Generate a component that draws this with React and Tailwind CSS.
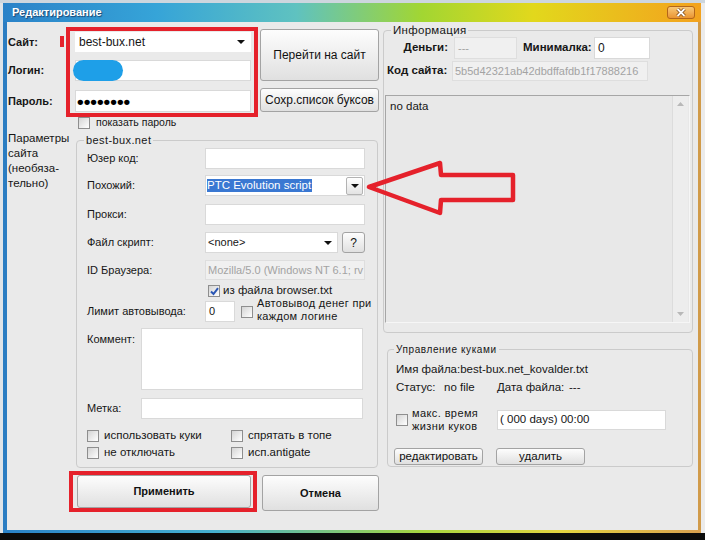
import React from "react";

const Tri = ({ color = "#111" }) => (
  <svg width="8" height="4" viewBox="0 0 8 4">
    <path d="M0 0H8L4 4Z" fill={color} />
  </svg>
);

const Box = ({ checked }) => (
  <span className="w-[12px] h-[12px] shrink-0 border border-[#8e8e8e] bg-linear-to-br from-[#d4d4d4] to-white flex items-center justify-center">
    {checked && (
      <svg width="9" height="9" viewBox="0 0 9 9">
        <path d="M1 4.5L3.5 7L8 1.2" fill="none" stroke="#2b57b5" strokeWidth="2" />
      </svg>
    )}
  </span>
);

const Btn = ({ className = "", children }) => (
  <div
    className={`shrink-0 flex items-center justify-center border border-[#a3a3a3] rounded-[3px] bg-linear-to-b from-[#fdfdfd] to-[#e0e0e0] text-[#111] ${className}`}
  >
    {children}
  </div>
);

const Field = ({ className = "", children }) => (
  <div className={`shrink-0 flex items-center bg-white border border-[#d9d9d9] overflow-hidden whitespace-nowrap ${className}`}>
    {children}
  </div>
);

const Dim = ({ className = "", children }) => (
  <div className={`shrink-0 flex items-center bg-[#f0f0f0] border border-[#dedede] text-[#a3a3a3] overflow-hidden whitespace-nowrap ${className}`}>
    {children}
  </div>
);

const Row = ({ label, className = "", children }) => (
  <div className={`flex items-center ${className}`}>
    <div className="w-[118px] shrink-0">{label}</div>
    {children}
  </div>
);

export default function App() {
  return (
    <div className="w-[705px] h-[540px] relative overflow-hidden bg-[#0b0b0b] font-['Liberation_Sans',Arial,sans-serif] text-[11px] text-[#161616]">
      <div className="h-[3px] bg-[#cdd6de]" />
      <div className="flex h-[530px]">
        <div className="w-[3px] bg-[#dfe4e8]" />
        <div className="w-[698px] flex flex-col">
          {/* Title bar */}
          <div className="h-[19px] flex items-center justify-between bg-[linear-gradient(90deg,#2a82c8_0%,#36a4d8_22%,#5fc2c0_42%,#a2d632_60%,#e2d81c_76%,#f3a21e_100%)]">
            <span className="pl-[9px] text-white font-bold text-[11px] [text-shadow:1px_1px_1px_#1d4670]">
              Редактирование
            </span>
            <div className="mr-[6px] w-[28px] h-[13px] rounded-[3px] border border-[#b4651a] bg-linear-to-b from-[#f8c774] to-[#ea9530] flex items-center justify-center">
              <svg width="12" height="9" viewBox="0 0 12 9">
                <path d="M2.5 1L9.5 8M9.5 1L2.5 8" stroke="#7a4512" strokeWidth="3.4" />
                <path d="M2.5 1L9.5 8M9.5 1L2.5 8" stroke="#fff" strokeWidth="1.8" />
              </svg>
            </div>
          </div>

          <div className="flex h-[508px]">
            <div className="w-[4px] bg-[#2b7dc2]" />
            <div className="w-[691px] bg-[#eaeaea] flex">
              {/* Left column */}
              <div className="w-[375px] shrink-0 flex flex-col">
                <div className="flex mt-[5px] h-[90px]">
                  <div className="w-[53px] shrink-0 pl-[1px] flex flex-col font-bold">
                    <div className="h-[20px] mt-[5px] flex items-center">Сайт:</div>
                    <div className="h-[21px] mt-[8px] flex items-center">Логин:</div>
                    <div className="h-[22px] mt-[9px] flex items-center">Пароль:</div>
                  </div>
                  <div className="w-[4px] h-[11px] mt-[9px] bg-[#e5212b]" />
                  <div className="ml-[2px] w-[192px] shrink-0 h-[90px] border-4 border-[#e5212b] flex flex-col pl-[5px] pt-[1px]">
                    <Field className="w-[176px] h-[20px] pl-[3px] pr-[5px] justify-between border-transparent">
                      <span className="text-[12px]">best-bux.net</span>
                      <Tri />
                    </Field>
                    <Field className="w-[176px] h-[21px] mt-[8px] overflow-visible">
                      <div className="-ml-[3px] w-[50px] h-[21px] rounded-full bg-[#1e9fe8]" />
                    </Field>
                    <Field className="w-[176px] h-[22px] mt-[9px] pl-[1px]">
                      <span className="text-[19px] font-bold leading-none text-black">••••••••</span>
                    </Field>
                  </div>
                  <div className="ml-[2px] w-[119px] flex flex-col">
                    <Btn className="mt-[2px] h-[52px] text-[12px]">Перейти на сайт</Btn>
                    <Btn className="mt-[7px] h-[24px] text-[12px]">Сохр.список буксов</Btn>
                  </div>
                </div>

                <div className="h-[12px] pl-[71px] flex items-center gap-[6px] text-[10.5px]">
                  <Box />
                  <span>показать пароль</span>
                </div>

                <div className="flex mt-[1px]">
                  <div className="w-[69px] shrink-0 pl-[1px] pt-[1px] text-[11.5px] leading-[15px]">
                    Параметры
                    <br />
                    сайта
                    <br />
                    (необяза-
                    <br />
                    тельно)
                  </div>
                  <fieldset className="mt-[3px] w-[302px] min-w-0 shrink-0 border border-[#cbcbcb] rounded-[4px] pl-[10px] pr-[12px] pb-[8px]">
                    <legend className="-ml-[3px] px-[2px] text-[11px] leading-[14px] tracking-[0.4px]">best-bux.net</legend>
                    <Row label="Юзер код:" className="mt-[1px]">
                      <Field className="w-[160px] h-[21px]" />
                    </Row>
                    <Row label="Похожий:" className="mt-[6px]">
                      <Field className="w-[160px] h-[21px] justify-between pr-[1px]">
                        <span className="ml-[1px] bg-[#3a78d2] text-white text-[11.5px] leading-[13px] pr-[1px]">PTC Evolution script</span>
                        <div className="w-[17px] h-[18px] border border-[#b3b3b3] rounded-[2px] bg-linear-to-b from-white to-[#e3e3e3] flex items-center justify-center">
                          <Tri />
                        </div>
                      </Field>
                    </Row>
                    <Row label="Прокси:" className="mt-[8px]">
                      <Field className="w-[160px] h-[21px]" />
                    </Row>
                    <Row label="Файл скрипт:" className="mt-[7px]">
                      <Field className="w-[133px] h-[21px] pl-[2px] pr-[5px] justify-between">
                        <span>&lt;none&gt;</span>
                        <Tri />
                      </Field>
                      <Btn className="ml-[4px] w-[23px] h-[21px] text-[12px]">?</Btn>
                    </Row>
                    <Row label="ID Браузера:" className="mt-[7px]">
                      <Dim className="w-[160px] h-[20px] pl-[2px] text-[11px]">Mozilla/5.0 (Windows NT 6.1; rv</Dim>
                    </Row>
                    <div className="mt-[5px] h-[12px] ml-[121px] flex items-center gap-[3px] text-[11.5px]">
                      <Box checked />
                      <span>из файла browser.txt</span>
                    </div>
                    <Row label="Лимит автовывода:" className="mt-[4px] h-[21px]">
                      <Field className="w-[30px] h-[21px] pl-[3px]">0</Field>
                      <div className="ml-[6px] shrink-0">
                        <Box />
                      </div>
                      <div className="ml-[4px] -mt-[3px] shrink-0 text-[11px] leading-[13px] tracking-[0.3px] whitespace-nowrap">
                        Автовывод денег при
                        <br />
                        каждом логине
                      </div>
                    </Row>
                    <div className="mt-[6px] flex">
                      <div className="w-[54px] pt-[3px]">Коммент:</div>
                      <Field className="w-[222px] h-[62px]" />
                    </div>
                    <div className="mt-[8px] flex items-center">
                      <div className="w-[54px]">Метка:</div>
                      <Field className="w-[222px] h-[21px]" />
                    </div>
                    <div className="mt-[11px] h-[12px] flex items-center text-[11.5px]">
                      <div className="w-[144px] flex items-center gap-[5px]">
                        <Box />
                        <span>использовать куки</span>
                      </div>
                      <div className="flex items-center gap-[5px]">
                        <Box />
                        <span>спрятать в топе</span>
                      </div>
                    </div>
                    <div className="mt-[5px] h-[12px] flex items-center text-[11.5px]">
                      <div className="w-[144px] flex items-center gap-[5px]">
                        <Box />
                        <span>не отключать</span>
                      </div>
                      <div className="flex items-center gap-[5px]">
                        <Box />
                        <span>исп.antigate</span>
                      </div>
                    </div>
                  </fieldset>
                </div>

                <div className="flex">
                  <div className="ml-[62px] mt-[3px] w-[188px] h-[41px] border-4 border-[#e5212b] pl-[4px]">
                    <Btn className="w-[174px] h-[33px] font-bold">Применить</Btn>
                  </div>
                  <Btn className="ml-[5px] mt-[7px] w-[117px] h-[36px] font-bold">Отмена</Btn>
                </div>
              </div>

              {/* Right column */}
              <div className="ml-[1px] w-[310px] shrink-0 flex flex-col">
                <fieldset className="mt-[2px] w-[310px] min-w-0 border border-[#cbcbcb] rounded-[4px] pb-[9px]">
                  <legend className="ml-[7px] px-[2px] text-[11.5px] leading-[13px] tracking-[0.3px]">Информация</legend>
                  <div className="flex items-center h-[22px]">
                    <div className="w-[64px] text-right font-bold text-[11.5px]">Деньги:</div>
                    <Dim className="ml-[6px] w-[63px] h-[22px] pl-[3px]">---</Dim>
                    <div className="ml-[6px] w-[71px] font-bold text-[11.5px]">Минималка:</div>
                    <Field className="w-[56px] h-[22px] pl-[3px] text-[12px]">0</Field>
                  </div>
                  <div className="flex items-center h-[20px] mt-[2px]">
                    <div className="w-[68px] pl-[3px] font-bold text-[11.5px] whitespace-nowrap">Код сайта:</div>
                    <Dim className="w-[196px] h-[20px] pl-[2px]">5b5d42321ab42dbdffafdb1f17888216</Dim>
                  </div>
                  <div className="mt-[14px] ml-[1px] w-[305px] h-[228px] flex border border-t-[#a6a6a6] border-l-[#a6a6a6] border-r-[#f6f6f6] border-b-[#f6f6f6] bg-[#e8e8e8]">
                    <div className="flex-1 pl-[4px] pt-[2px] text-[11.5px]">no data</div>
                    <div className="w-[16px] mr-[1px] bg-[#ededed] border-l border-[#dcdcdc] flex flex-col items-center justify-between py-[6px]">
                      <svg width="7" height="4" viewBox="0 0 7 4">
                        <path d="M0 4H7L3.5 0Z" fill="#b8b8b8" />
                      </svg>
                      <svg width="7" height="4" viewBox="0 0 7 4">
                        <path d="M0 0H7L3.5 4Z" fill="#b8b8b8" />
                      </svg>
                    </div>
                  </div>
                </fieldset>

                <fieldset className="mt-[10px] ml-[4px] w-[306px] min-w-0 border border-[#cbcbcb] rounded-[4px] pb-[1px] text-[11.5px]">
                  <legend className="ml-[6px] px-[2px] text-[10px] leading-[13px] tracking-[0.6px]">Управление куками</legend>
                  <div className="mt-[5px] pl-[8px] leading-[16px]">Имя файла:best-bux.net_kovalder.txt</div>
                  <div className="mt-[2px] pl-[8px] leading-[16px] flex">
                    <span className="w-[48px]">Статус:</span>
                    <span className="w-[53px]">no file</span>
                    <span className="w-[72px]">Дата файла:</span>
                    <span>---</span>
                  </div>
                  <div className="mt-[15px] pl-[8px] flex items-center h-[20px]">
                    <Box />
                    <div className="ml-[4px] w-[85px] text-[11px] leading-[13px] tracking-[0.4px]">
                      макс. время
                      <br />
                      жизни куков
                    </div>
                    <Field className="w-[169px] h-[20px] pl-[2px]">( 000 days) 00:00</Field>
                  </div>
                  <div className="mt-[18px] pl-[6px] flex">
                    <Btn className="w-[89px] h-[17px]">редактировать</Btn>
                    <Btn className="ml-[13px] w-[89px] h-[17px]">удалить</Btn>
                  </div>
                </fieldset>
              </div>
            </div>
            <div className="w-[3px] bg-[#d19b4a]" />
          </div>
          <div className="h-[3px] bg-[linear-gradient(90deg,#2a82c8_0%,#45b0d0_30%,#a6d640_60%,#e4d440_80%,#d9a050_100%)]" />
        </div>
        <div className="w-[4px] bg-[#ececec]" />
      </div>

      {/* annotation arrow */}
      <svg
        className="absolute left-[365px] top-[158px] pointer-events-none"
        width="152"
        height="60"
        viewBox="0 0 152 60"
      >
        <polygon
          points="4,29 75,5 76,17 148,17 148,42 76,42 75,55"
          fill="none"
          stroke="#e5212b"
          strokeWidth="4.5"
          strokeLinejoin="round"
        />
      </svg>
    </div>
  );
}
